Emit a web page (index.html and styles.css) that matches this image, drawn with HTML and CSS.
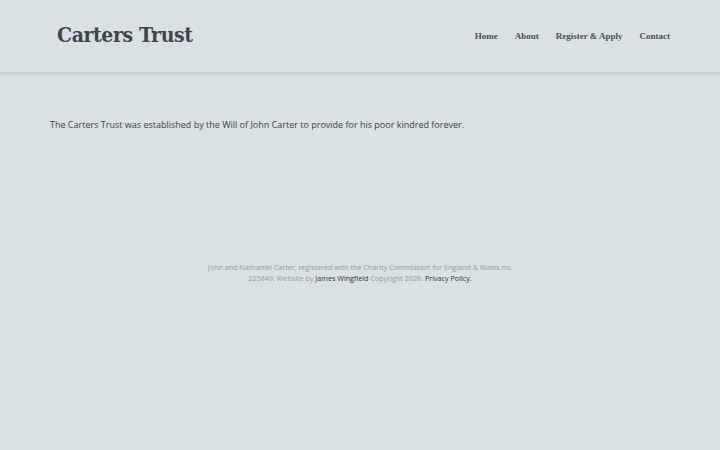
FILE: index.html
```html
<!DOCTYPE html>
<html lang="en">
<head>
    <meta charset="UTF-8">
    <meta name="viewport" content="width=device-width, initial-scale=1.0">
    <title>Carters Trust</title>
    <link rel="stylesheet" href="styles.css">
</head>
<body>

    <!-- Cabeçalho com o nome e o menu -->
    <header class="site-header">
        <div class="header-inner">
            <a href="#" class="site-title">Carters Trust</a>
            <nav class="main-nav">
                <a href="#">Home</a>
                <a href="#">About</a>
                <a href="#">Register &amp; Apply</a>
                <a href="#">Contact</a>
            </nav>
        </div>
    </header>

    <main class="content">
        <p>The Carters Trust was established by the Will of John Carter to provide for his poor kindred forever.</p>
    </main>

    <footer class="site-footer">
        <p>John and Nathaniel Carter, registered with the Charity Commission for England &amp; Wales no. 225849. Website by <a href="#">James Wingfield</a> Copyright 2026. <a href="#">Privacy Policy.</a></p>
    </footer>

</body>
</html>
```

FILE: styles.css
```css
body {
    margin: 0;
    background: #d9e1e3;
    font-family: "Open Sans", Arial, sans-serif;
    color: #3d4347;
}

a {
    text-decoration: none;
}

.site-header {
    height: 72px;
    background: #d9e1e3;
    box-shadow: 0 1px 5px rgba(0, 0, 0, 0.12);
}
.header-inner {
    width: 620px;
    height: 100%;
    margin: 0 auto;
    display: flex;
    align-items: center;
    justify-content: space-between;
}
.site-title {
    margin: 0 0 4px 7px;
    font-family: "DejaVu Serif Condensed", "DejaVu Serif", serif;
    font-weight: bold;
    font-size: 21px;
    letter-spacing: -0.4px;
    color: #3f464b;
}
.main-nav {
    display: flex;
    gap: 17px;
}
.main-nav a {
    font-family: "Liberation Serif", serif;
    font-weight: bold;
    font-size: 9px;
    color: #4a5055;
}

.content {
    width: 620px;
    margin: 0 auto;
    padding-top: 43px;
}
.content p {
    margin: 0;
    font-size: 9px;
    line-height: 20px;
    color: #3d4347;
}

.site-footer {
    width: 320px;
    margin: 127px auto 0;
    text-align: center;
}
.site-footer p {
    margin: 0;
    font-size: 7.2px;
    line-height: 11px;
    color: #979ea2;
}
.site-footer a {
    color: #30363a;
}
```
